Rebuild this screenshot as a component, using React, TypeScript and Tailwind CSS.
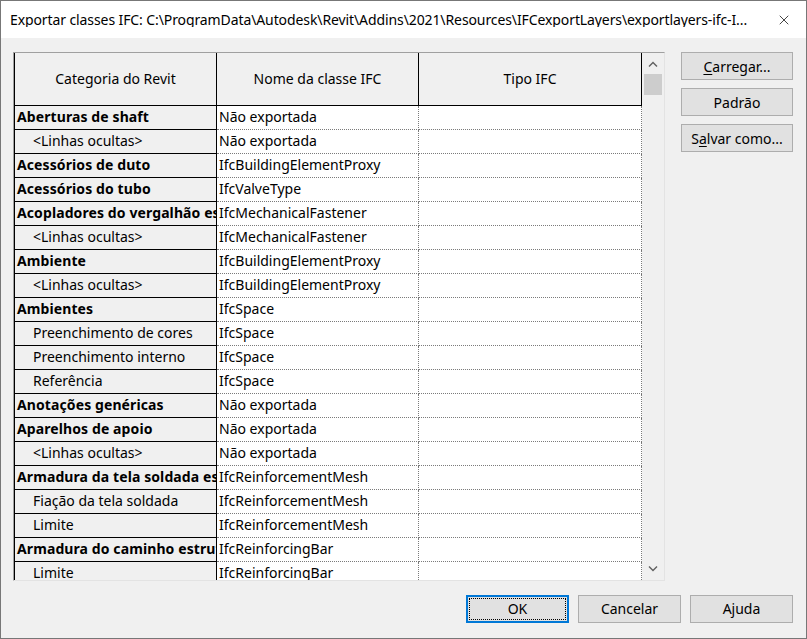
import { X } from "lucide-react";

type Row = { name: string; child?: boolean; ifc: string };

const rows: Row[] = [
  { name: "Aberturas de shaft", ifc: "Não exportada" },
  { name: "<Linhas ocultas>", child: true, ifc: "Não exportada" },
  { name: "Acessórios de duto", ifc: "IfcBuildingElementProxy" },
  { name: "Acessórios do tubo", ifc: "IfcValveType" },
  { name: "Acopladores do vergalhão estrutural", ifc: "IfcMechanicalFastener" },
  { name: "<Linhas ocultas>", child: true, ifc: "IfcMechanicalFastener" },
  { name: "Ambiente", ifc: "IfcBuildingElementProxy" },
  { name: "<Linhas ocultas>", child: true, ifc: "IfcBuildingElementProxy" },
  { name: "Ambientes", ifc: "IfcSpace" },
  { name: "Preenchimento de cores", child: true, ifc: "IfcSpace" },
  { name: "Preenchimento interno", child: true, ifc: "IfcSpace" },
  { name: "Referência", child: true, ifc: "IfcSpace" },
  { name: "Anotações genéricas", ifc: "Não exportada" },
  { name: "Aparelhos de apoio", ifc: "Não exportada" },
  { name: "<Linhas ocultas>", child: true, ifc: "Não exportada" },
  { name: "Armadura da tela soldada estrutural", ifc: "IfcReinforcementMesh" },
  { name: "Fiação da tela soldada", child: true, ifc: "IfcReinforcementMesh" },
  { name: "Limite", child: true, ifc: "IfcReinforcementMesh" },
  { name: "Armadura do caminho estrutural", ifc: "IfcReinforcingBar" },
  { name: "Limite", child: true, ifc: "IfcReinforcingBar" },
];

function Chevron({ up }: { up?: boolean }) {
  return (
    <svg width="10" height="6" viewBox="0 0 10 6" className="text-[#606060]">
      <path
        d={up ? "M1 5.5 L5 1.5 L9 5.5" : "M1 0.5 L5 4.5 L9 0.5"}
        fill="none"
        stroke="currentColor"
        strokeWidth="1.4"
      />
    </svg>
  );
}

function SideButton({ children }: { children: React.ReactNode }) {
  return (
    <button className="w-[112px] h-[28px] bg-[#e1e1e1] border border-[#adadad] flex items-center justify-center pt-[1px] text-[14px] text-black">
      {children}
    </button>
  );
}

export default function App() {
  return (
    <div className="w-[807px] h-[639px] border border-[#777777] flex flex-col font-['Noto_Sans',sans-serif] text-black text-[14px] leading-none overflow-hidden">
      {/* title bar */}
      <div className="h-[37px] bg-white flex items-center pl-[9px] pr-[14px] shrink-0">
        <div className="flex-1 text-[14px] whitespace-nowrap overflow-hidden tracking-[-0.1px]">
          Exportar classes IFC: C:\ProgramData\Autodesk\Revit\Addins\2021\Resources\IFCexportLayers\exportlayers-ifc-I...
        </div>
        <X size={16} strokeWidth={1.1} className="ml-[14px] text-black" />
      </div>

      <div className="flex-1 bg-[#f0f0f0] flex flex-col pl-[12px] pt-[14px]">
        <div className="flex">
          {/* grid */}
          <div className="w-[652px] h-[529px] border-t border-l border-[#a0a0a0] border-r border-b border-r-[#e3e3e3] border-b-[#e3e3e3] flex overflow-hidden">
            <div className="w-[628px] flex flex-col overflow-hidden">
              <div className="h-[53px] flex shrink-0 bg-[#f0f0f0] border-b border-black">
                <div className="w-[203px] border-l border-r border-black flex items-center justify-center">
                  Categoria do Revit
                </div>
                <div className="w-[202px] border-r border-black flex items-center justify-center">
                  Nome da classe IFC
                </div>
                <div className="w-[223px] border-r border-black flex items-center justify-center">
                  Tipo IFC
                </div>
              </div>
              {rows.map((r, i) => (
                <div key={i} className="h-[24px] flex shrink-0">
                  <div
                    className={`w-[203px] bg-[#f0f0f0] border-l border-r border-b border-black flex items-center pb-[1px] whitespace-nowrap overflow-hidden ${
                      r.child ? "pl-[18px]" : "pl-[2px] font-bold tracking-[0.1px]"
                    }`}
                  >
                    {r.name}
                  </div>
                  <div className="w-[202px] bg-white border-r border-b border-dotted border-[#7a7a7a] flex items-center pb-[1px] pl-[2px] whitespace-nowrap overflow-hidden">
                    {r.ifc}
                  </div>
                  <div className="w-[223px] bg-white border-r border-b border-dotted border-[#7a7a7a]" />
                </div>
              ))}
            </div>
            {/* scrollbar */}
            <div className="w-[22px] bg-[#f0f0f0] flex flex-col items-center">
              <div className="h-[21px] flex items-center justify-center">
                <Chevron up />
              </div>
              <div className="w-[18px] h-[21px] bg-[#cdcdcd]" />
              <div className="flex-1" />
              <div className="h-[21px] flex items-center justify-center pb-[2px]">
                <Chevron />
              </div>
            </div>
          </div>

          {/* side buttons */}
          <div className="ml-[16px] flex flex-col gap-[8px]">
            <SideButton>
              <span>
                <span className="underline underline-offset-2">C</span>arregar...
              </span>
            </SideButton>
            <SideButton>Padrão</SideButton>
            <SideButton>
              <span>
                S<span className="underline underline-offset-2">a</span>lvar como...
              </span>
            </SideButton>
          </div>
        </div>

        {/* bottom buttons */}
        <div className="flex justify-end gap-[9px] pr-[13px] mt-[14px]">
          <button className="w-[103px] h-[28px] bg-[#e1e1e1] border-2 border-[#0078d7] flex p-[1px]">
            <span className="flex-1 border border-dotted border-black flex items-center justify-center">
              OK
            </span>
          </button>
          <button className="w-[103px] h-[28px] bg-[#e1e1e1] border border-[#adadad] flex items-center justify-center">
            Cancelar
          </button>
          <button className="w-[103px] h-[28px] bg-[#e1e1e1] border border-[#adadad] flex items-center justify-center">
            Ajuda
          </button>
        </div>
      </div>
    </div>
  );
}
